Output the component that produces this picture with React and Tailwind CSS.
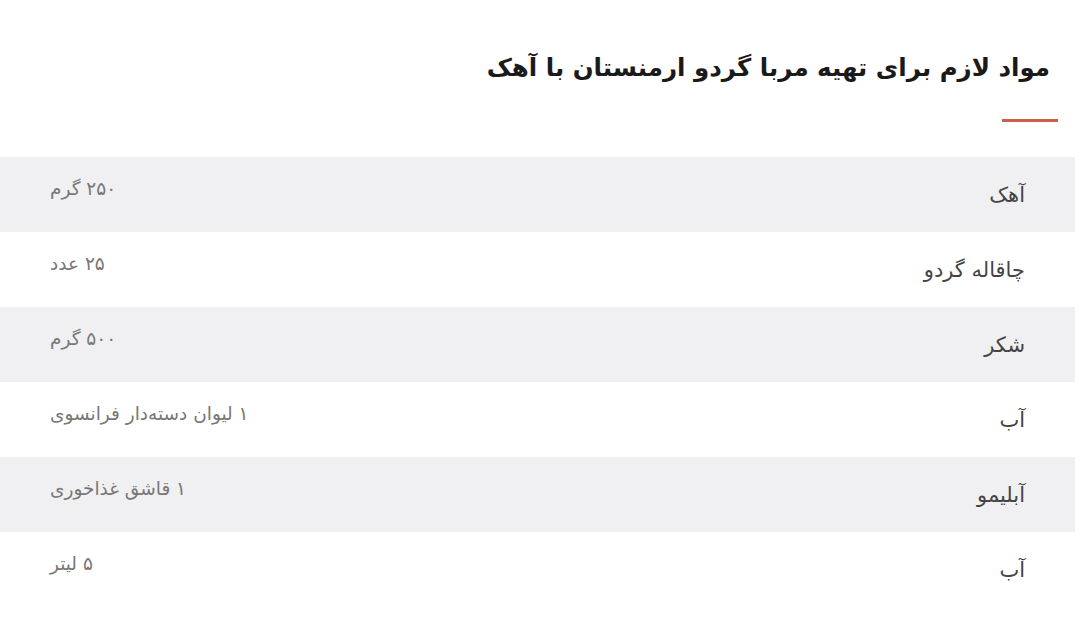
const items = [
    { name: 'آهک', amount: '۲۵۰ گرم' },
    { name: 'چاقاله گردو', amount: '۲۵ عدد' },
    { name: 'شکر', amount: '۵۰۰ گرم' },
    { name: 'آب', amount: '۱ لیوان دسته‌دار فرانسوی' },
    { name: 'آبلیمو', amount: '۱ قاشق غذاخوری' },
    { name: 'آب', amount: '۵ لیتر' },
];

export default function App() {
    return (
        <div dir="rtl" className="w-[1080px] h-[628px] bg-white overflow-hidden" style={{ fontFamily: '"DejaVu Sans", "Noto Sans", sans-serif' }}>
            <div className="pr-[30px] pt-[46px]">
                <h1 className="text-[24.5px] font-bold text-[#1a1a1a] leading-[44px]">مواد لازم برای تهیه مربا گردو ارمنستان با آهک</h1>
                <div className="mt-[29px] w-[56px] h-[3px] bg-[#c8604c] mr-[-8px]" />
            </div>

            <div className="mt-[35px] mr-[5px]">
                {items.map((it, i) => (
                    <div key={i} className={`flex items-center justify-between h-[75px] pr-[50px] pl-[50px] ${i % 2 === 0 ? 'bg-[#f0f0f2]' : 'bg-white'}`}>
                        <span className="text-[21px] text-[#444] mt-[2px]">{it.name}</span>
                        <span className="text-[18.5px] text-[#777] -mt-[12px]">{it.amount}</span>
                    </div>
                ))}
            </div>
        </div>
    );
}
